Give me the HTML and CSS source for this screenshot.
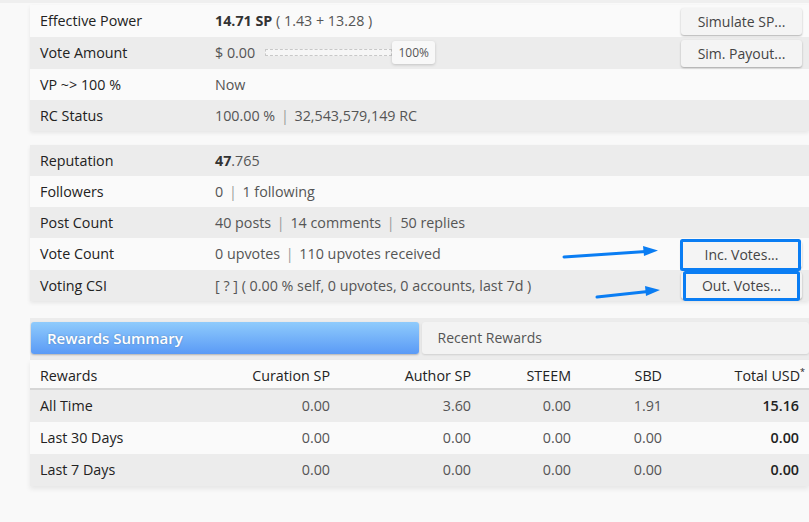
FILE: index.html
```html
<!DOCTYPE html>
<html lang="en">
<head>
<meta charset="utf-8">
<title>Account Info</title>
<link rel="stylesheet" href="styles.css">
</head>
<body>
<div class="topstrip"></div>
<div class="page">
  <div class="card">
    <div class="row light">
      <div class="label">Effective Power</div>
      <div class="value"><b class="strong">14.71 SP</b> ( 1.43 + 13.28 )</div>
      <div class="action"><button class="btn">Simulate SP...</button></div>
    </div>
    <div class="row gray">
      <div class="label">Vote Amount</div>
      <div class="value slider-line">
        <span>$ 0.00</span>
        <span class="track"></span>
        <span class="thumb">100%</span>
      </div>
      <div class="action"><button class="btn">Sim. Payout...</button></div>
    </div>
    <div class="row light short">
      <div class="label">VP ~&gt; 100 %</div>
      <div class="value">Now</div>
    </div>
    <div class="row gray short">
      <div class="label">RC Status</div>
      <div class="value">100.00 % <span class="sep">|</span> 32,543,579,149 RC</div>
    </div>
  </div>

  <div class="card second">
    <div class="row gray short">
      <div class="label">Reputation</div>
      <div class="value"><b class="strong">47</b>.765</div>
    </div>
    <div class="row light short">
      <div class="label">Followers</div>
      <div class="value">0 <span class="sep">|</span> 1 following</div>
    </div>
    <div class="row gray short">
      <div class="label">Post Count</div>
      <div class="value">40 posts <span class="sep">|</span> 14 comments <span class="sep">|</span> 50 replies</div>
    </div>
    <div class="row light">
      <div class="label">Vote Count</div>
      <div class="value">0 upvotes <span class="sep">|</span> 110 upvotes received</div>
      <div class="action"><button class="btn">Inc. Votes...</button></div>
    </div>
    <div class="row gray short">
      <div class="label">Voting CSI</div>
      <div class="value">[ ? ] ( 0.00 % self, 0 upvotes, 0 accounts, last 7d )</div>
      <div class="action"><button class="btn">Out. Votes...</button></div>
    </div>
  </div>

  <div class="tabs">
    <div class="tab active">Rewards Summary</div>
    <div class="tab">Recent Rewards</div>
  </div>

  <table class="rewards">
    <colgroup>
      <col class="c1"><col class="c2"><col class="c3"><col class="c4"><col class="c5"><col class="c6">
    </colgroup>
    <thead>
      <tr>
        <th class="left">Rewards</th>
        <th>Curation SP</th>
        <th>Author SP</th>
        <th>STEEM</th>
        <th>SBD</th>
        <th class="total-head">Total USD<sup>*</sup></th>
      </tr>
    </thead>
    <tbody>
      <tr class="gray">
        <td class="left">All Time</td><td>0.00</td><td>3.60</td><td>0.00</td><td>1.91</td><td class="total">15.16</td>
      </tr>
      <tr class="light">
        <td class="left">Last 30 Days</td><td>0.00</td><td>0.00</td><td>0.00</td><td>0.00</td><td class="total">0.00</td>
      </tr>
      <tr class="gray">
        <td class="left">Last 7 Days</td><td>0.00</td><td>0.00</td><td>0.00</td><td>0.00</td><td class="total">0.00</td>
      </tr>
    </tbody>
  </table>
</div>

<!-- highlight marks drawn over the vote buttons -->
<svg class="marks" width="809" height="522" viewBox="0 0 809 522">
  <g fill="none" stroke="#0a7df3" stroke-width="3">
    <rect x="681.5" y="240.5" width="118" height="29" rx="1"/>
    <rect x="684.5" y="272.5" width="114" height="27" rx="1"/>
  </g>
  <g stroke="#0a7df3" stroke-width="3" stroke-linecap="round">
    <line x1="564" y1="257" x2="646" y2="251.5"/>
    <line x1="597" y1="297" x2="648" y2="291.5"/>
  </g>
  <g fill="#0a7df3">
    <polygon points="643,246 658,250.5 644,256"/>
    <polygon points="645,286 660,290 646,296"/>
  </g>
</svg>
</body>
</html>
```

FILE: styles.css
```css
html, body {
  margin: 0;
  padding: 0;
}

body {
  background: #f9f9f9;
  font-family: "Open Sans", "Noto Sans", sans-serif;
  font-size: 14.3px;
  color: #555;
  width: 809px;
  height: 522px;
  overflow: hidden;
  position: relative;
}

.topstrip {
  height: 3px;
  background: #efefef;
}

.page {
  padding: 2px 0 0 30px;
}

.card {
  background: #fafafa;
  box-shadow: 0 2px 4px rgba(0, 0, 0, 0.08);
}

.card.second {
  margin-top: 14px;
}

.row {
  display: grid;
  grid-template-columns: 185px 1fr 130px;
  align-items: center;
  height: 32px;
  box-sizing: border-box;
  padding-bottom: 1px;
}

.row.short {
  height: 31px;
}

.light {
  background: #fafafa;
}

.gray {
  background: #ececec;
}

.label {
  padding-left: 10px;
  color: #222;
}

.value {
  color: #555;
  white-space: nowrap;
}

.strong {
  color: #333;
  font-weight: 700;
}

.sep {
  color: #9a9a9a;
  margin: 0 2px;
}

.action {
  display: flex;
  justify-content: flex-end;
  padding-right: 7px;
  margin-top: 1px;
}

.btn {
  font-family: inherit;
  font-size: 14px;
  color: #444;
  background: #f4f4f4;
  border: none;
  border-radius: 3px;
  box-shadow: 0 1px 2px rgba(0, 0, 0, 0.3);
  width: 121px;
  height: 27px;
  padding: 0;
  cursor: pointer;
}

.slider-line {
  display: flex;
  align-items: center;
}

.track {
  display: inline-block;
  width: 127px;
  height: 7px;
  margin-left: 10px;
  border: 1px dashed #c8c8c8;
  background: #f6f6f6;
  box-sizing: border-box;
}

.thumb {
  display: inline-block;
  width: 43px;
  height: 23px;
  line-height: 23px;
  text-align: center;
  font-size: 12px;
  color: #555;
  background: #f8f8f8;
  border-radius: 3px;
  box-shadow: 0 1px 3px rgba(0, 0, 0, 0.18);
}

.tabs {
  display: flex;
  gap: 3px;
  margin-top: 17px;
  padding: 4px 0 6px 1px;
  background: #ececec;
}

.tab {
  flex: 1;
  height: 32px;
  line-height: 32px;
  padding-left: 16px;
  border-radius: 3px;
  background: #f3f3f3;
  box-shadow: 0 1px 2px rgba(0, 0, 0, 0.12);
  color: #555;
  font-size: 14px;
}

.tab.active {
  background: linear-gradient(#8fcbfc, #5a9af6);
  color: #fff;
  font-weight: 600;
  font-size: 15px;
  text-shadow: 0 0 2px rgba(0, 0, 0, 0.25);
  box-shadow: 0 1px 2px rgba(0, 0, 0, 0.25);
}

.rewards {
  width: 779px;
  border-collapse: collapse;
  table-layout: fixed;
  background: #fafafa;
  box-shadow: 0 3px 5px rgba(0, 0, 0, 0.08);
}

.c1 { width: 160px; }
.c2 { width: 150px; }
.c3 { width: 141px; }
.c4 { width: 100px; }
.c5 { width: 91px; }
.c6 { width: 137px; }

.rewards th,
.rewards td {
  text-align: right;
  padding: 0 10px;
  white-space: nowrap;
}

.rewards th {
  height: 26px;
  font-weight: 400;
  color: #222;
  border-bottom: 2px solid #d6d6d6;
  padding-top: 2px;
}

.rewards td {
  height: 31px;
  padding-bottom: 1px;
  color: #555;
}

.rewards .left {
  text-align: left;
  color: #222;
}

.rewards th.total-head {
  padding-right: 4px;
}

.rewards sup {
  font-size: 9px;
  line-height: 0;
}

.rewards td.total {
  color: #222;
  font-weight: 600;
}

.marks {
  position: absolute;
  left: 0;
  top: 0;
  pointer-events: none;
}
```
